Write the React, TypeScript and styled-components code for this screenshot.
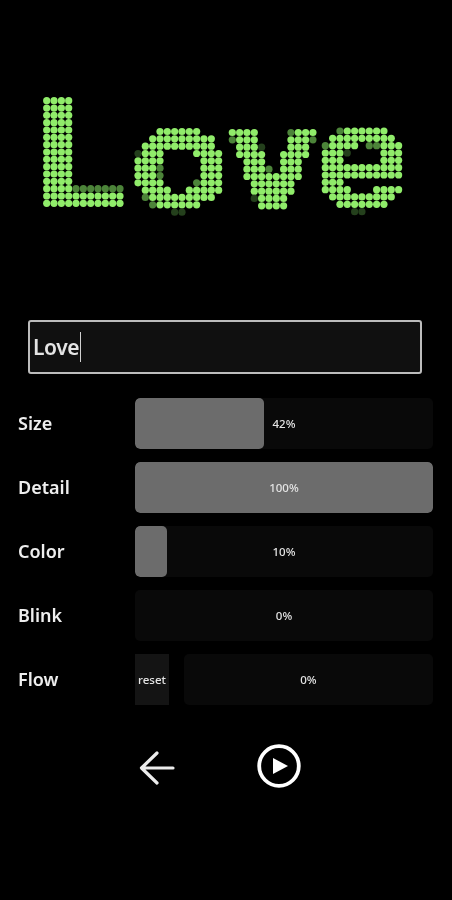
import styled, { createGlobalStyle } from "styled-components";

const GlobalStyle = createGlobalStyle`
  html, body {
    background: #000;
    margin: 0;
    padding: 0;
  }

  body {
    font-family: "Noto Sans", "Open Sans", sans-serif;
  }
`;

const Screen = styled.div`
  background: #000;
  display: flex;
  filter: blur(0.55px);
  flex-direction: column;
  height: 900px;
  overflow: hidden;
  width: 452px;
`;

const Display = styled.svg`
  display: block;
  filter: blur(0.7px);
  flex: none;
  height: 320px;
  width: 452px;
`;

const InputRow = styled.div`
  padding: 0 30px 0 28px;
`;

const TextField = styled.div`
  align-items: center;
  background: #101010;
  border: 2px solid #bcbcbc;
  border-radius: 3px;
  box-sizing: border-box;
  color: #e4e4e4;
  display: flex;
  font-size: 21px;
  font-weight: 600;
  height: 54px;
  letter-spacing: -0.4px;
  padding-left: 3px;
`;

const Caret = styled.span`
  background: #d0d0d0;
  display: block;
  height: 30px;
  margin-left: 1px;
  width: 1px;
`;

const Controls = styled.div`
  display: flex;
  flex-direction: column;
  gap: 13px;
  margin-top: 24px;
  padding: 0 19px 0 18px;
`;

const Row = styled.div`
  align-items: center;
  display: flex;
  height: 51px;
`;

const Label = styled.span`
  color: #eeeeee;
  flex: none;
  font-size: 18px;
  font-weight: 600;
  padding-bottom: 2px;
  width: 117px;
`;

const Track = styled.div`
  background: #090909;
  border-radius: 5px;
  display: grid;
  flex: 1;
  height: 51px;
  overflow: hidden;

  & > * {
    grid-area: 1 / 1;
  }
`;

const Fill = styled.div`
  background: #6c6c6c;
  border-radius: 5px;
  height: 100%;
`;

const Value = styled.span`
  align-self: center;
  color: #e4e4e4;
  font-size: 11.5px;
  font-weight: 500;
  justify-self: center;
`;

const ResetButton = styled.button`
  background: #141414;
  border: 0;
  color: #e4e4e4;
  flex: none;
  font-family: inherit;
  font-size: 11.5px;
  font-weight: 500;
  height: 51px;
  margin-right: 15px;
  padding: 0;
  width: 34px;
`;

const Footer = styled.div`
  align-items: center;
  display: flex;
  gap: 80px;
  margin-top: 39px;
  padding-left: 137px;
`;

const IconButton = styled.button`
  background: none;
  border: 0;
  display: block;
  line-height: 0;
  padding: 0;
`;

// x = lit dot, d = half lit, f = barely lit
const LETTERS = [
  {
    x: 46.7,
    y: 100.7,
    rows: [
      "xxxx",
      "xxxx",
      "xxxx",
      "xxxx",
      "xxxx",
      "xxxx",
      "xxxx",
      "xxxx",
      "xxxx",
      "xxxx",
      "xxxx",
      "xxxx",
      "xxxxddddddd",
      "xxxxxxxxxxx",
      "xxxxxxxxxxx",
    ],
  },
  {
    x: 138,
    y: 131.5,
    rows: [
      "...xxxxxx...",
      "..xxxxxxxxx.",
      ".xxxxxxxxxx.",
      "fxxx....xxxx",
      "xxxx.....xxx",
      "xxxd.....xxx",
      "xxxd.....xxx",
      "xxxx....dxxx",
      ".xxxx..xxxxx",
      ".dxxxxxxxxx.",
      "..dxxxxxx...",
      ".....ff.....",
    ],
  },
  {
    x: 232.3,
    y: 132.5,
    rows: [
      "xxxx....dxxx",
      "dxxx....xxxd",
      ".xxxf...xxx.",
      ".xxxx..xxxx.",
      "..xxx..xxx..",
      "..xxxd.xxx..",
      "..xxxxxxxx..",
      "...xxxxxx...",
      "...xxxxxx...",
      "...fxxxx....",
      "....xxxx....",
    ],
  },
  {
    x: 325.3,
    y: 131,
    rows: [
      "..dxxxxxx..",
      ".xxxxxxxxx.",
      "dxxxx.ddxxx",
      "xxxf....xxx",
      "xxx.....xxx",
      "xxxxxxxxxxx",
      "xxxxxxxxxxx",
      "xxx........",
      "xxxx...xxxx",
      ".xxxxxxxxx.",
      "..xxxxxxx..",
      "....ff.....",
    ],
  },
];

const PITCH = 7.33;
const DOT_COLORS: Record<string, string> = {
  x: "#90ec6a",
  d: "#4c8439",
  f: "#24401c",
};

function LedText() {
  return (
    <Display viewBox="0 0 452 320" role="img" aria-label="Love">
      {LETTERS.map((letter) =>
        letter.rows.map((row, r) =>
          row.split("").map((cell, c) =>
            cell === "." ? null : (
              <circle
                key={`${letter.x}-${r}-${c}`}
                cx={letter.x + c * PITCH}
                cy={letter.y + r * PITCH}
                r={3.6}
                fill={DOT_COLORS[cell]}
              />
            ),
          ),
        ),
      )}
    </Display>
  );
}

const SLIDERS = [
  { label: "Size", value: 42, fill: 43.3 },
  { label: "Detail", value: 100, fill: 100 },
  { label: "Color", value: 10, fill: 10.9 },
  { label: "Blink", value: 0, fill: 0 },
];

function App() {
  return (
    <>
      <GlobalStyle />
      <Screen>
        <LedText />
        <InputRow>
          <TextField>
            Love
            <Caret />
          </TextField>
        </InputRow>
        <Controls>
          {SLIDERS.map((slider) => (
            <Row key={slider.label}>
              <Label>{slider.label}</Label>
              <Track>
                <Fill style={{ width: `${slider.fill}%` }} />
                <Value>{slider.value}%</Value>
              </Track>
            </Row>
          ))}
          <Row>
            <Label>Flow</Label>
            <ResetButton>reset</ResetButton>
            <Track>
              <Value>0%</Value>
            </Track>
          </Row>
        </Controls>
        <Footer>
          <IconButton aria-label="Back">
            <svg width="40" height="40" viewBox="0 0 40 40" fill="none">
              <path
                d="M36 22H5M20 7L4.5 22L20 37"
                stroke="#ececec"
                strokeWidth="3.2"
                strokeLinecap="round"
                strokeLinejoin="round"
              />
            </svg>
          </IconButton>
          <IconButton aria-label="Play">
            <svg width="44" height="44" viewBox="0 0 44 44" fill="none">
              <circle cx="22" cy="22" r="19.8" stroke="#fff" strokeWidth="3.8" />
              <path d="M16 14L31 22L16 30Z" fill="#fff" />
            </svg>
          </IconButton>
        </Footer>
      </Screen>
    </>
  );
}

export default App;
